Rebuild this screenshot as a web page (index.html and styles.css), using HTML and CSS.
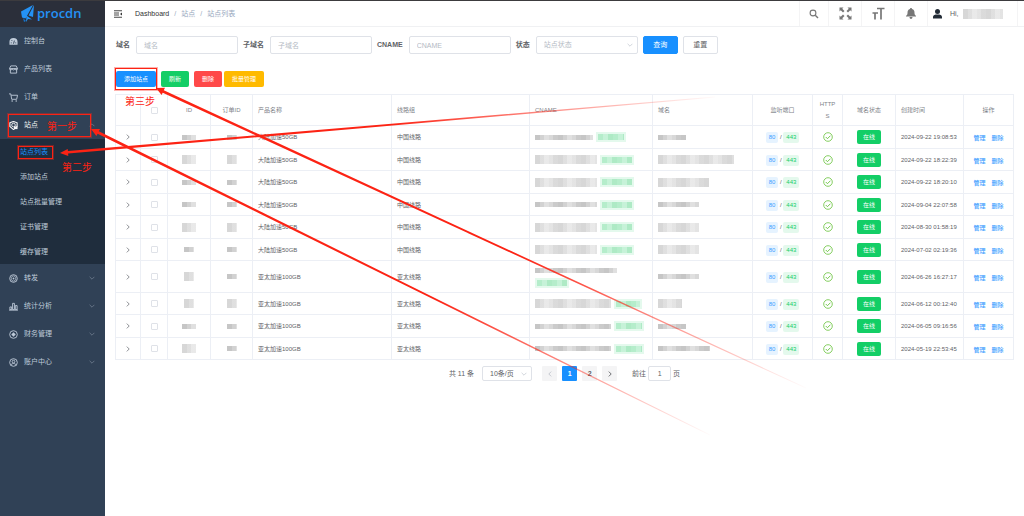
FILE: index.html
```html
<!DOCTYPE html>
<html lang="zh-CN">
<head>
<meta charset="utf-8">
<title>站点列表</title>
<link rel="stylesheet" href="styles.css">
</head>
<body>
<svg class="defs" width="0" height="0" aria-hidden="true">
  <symbol id="down" viewBox="0 0 10 10"><path d="M1 3l4 4 4-4" fill="none" stroke="currentColor"/></symbol>
  <symbol id="right" viewBox="0 0 10 10"><path d="M3 1l4 4-4 4" fill="none" stroke="currentColor" stroke-width="1.5"/></symbol>
  <symbol id="left" viewBox="0 0 10 10"><path d="M7 1L3 5l4 4" fill="none" stroke="currentColor" stroke-width="1.5"/></symbol>
  <symbol id="ok" viewBox="0 0 20 20"><circle cx="10" cy="10" r="8.6" fill="none" stroke="currentColor" stroke-width="1.6"/><path d="M5.5 10l3.4 3.4 6-6" fill="none" stroke="currentColor" stroke-width="1.8"/></symbol>
</svg>
<div class="app">
  <aside class="sidebar">
    <a class="logo" href="#">
      <svg width="16" height="18" viewBox="0 0 16 18"><path d="M14 0L13 12 8.500 10.500zM13 0L1 6.500l1 6 3.500 1zM6.500 10.500L6 17l2-3 4 .500z" fill="#2492f5"/><path d="M3 13l1 4 2-1z" fill="#1670c4"/></svg>
      <span>procdn</span>
    </a>
    <nav class="menu">
      <a class="item" href="#"><svg class="ico" viewBox="0 0 20 20"><path d="M1 17V11a9 9 0 0 1 18 0v6z" fill="currentColor"/><path d="M10 15l2-7M4 13h2M6 7l1 2M14 13h2" stroke="#304156" stroke-width="2"/></svg>控制台</a>
      <a class="item" href="#"><svg class="ico" viewBox="0 0 20 20"><path d="M4 2h12l3 6H1zM3 9v9h14V9M1 8c0 4 6 4 6 0 0 4 6 4 6 0 0 4 6 4 6 0" fill="none" stroke="currentColor" stroke-width="2"/></svg>产品列表</a>
      <a class="item" href="#"><svg class="ico" viewBox="0 0 20 20"><path d="M0 2h4l2 12h11l2-9H5" fill="none" stroke="currentColor" stroke-width="2"/><circle cx="7" cy="18" r="1.700" fill="currentColor"/><circle cx="16" cy="18" r="1.700" fill="currentColor"/></svg>订单</a>
      <a class="item current" href="#"><svg class="ico" viewBox="0 0 20 20"><path d="M2 4l8-3 8 3v8l-8 7-8-7z" fill="none" stroke="currentColor" stroke-width="2.500"/><circle cx="10" cy="9" r="4" fill="none" stroke="currentColor" stroke-width="2"/><path d="M11 12h8v6h-8z" fill="currentColor"/></svg>站点<svg class="caret up" viewBox="0 0 10 10"><use href="#down"/></svg></a>
      <div class="submenu">
        <a class="active" href="#">站点列表</a>
        <a href="#">添加站点</a>
        <a href="#">站点批量管理</a>
        <a href="#">证书管理</a>
        <a href="#">缓存管理</a>
      </div>
      <a class="item" href="#"><svg class="ico" viewBox="0 0 20 20"><circle cx="10" cy="10" r="8.500" fill="none" stroke="currentColor" stroke-width="2"/><path d="M10 4l5 3v6l-5 3-5-3V7z" fill="none" stroke="currentColor" stroke-width="1.500"/><circle cx="10" cy="10" r="2" fill="currentColor"/></svg>转发<svg class="caret" viewBox="0 0 10 10"><use href="#down"/></svg></a>
      <a class="item" href="#"><svg class="ico" viewBox="0 0 20 20"><path d="M2 11h4v6H2zM8 3h4v14H8zM14 8h4v9h-4zM0 18h20" fill="none" stroke="currentColor" stroke-width="2"/></svg>统计分析<svg class="caret" viewBox="0 0 10 10"><use href="#down"/></svg></a>
      <a class="item" href="#"><svg class="ico" viewBox="0 0 20 20"><circle cx="10" cy="10" r="8.500" fill="none" stroke="currentColor" stroke-width="2"/><path d="M10 5l5 5-5 5-5-5z" fill="currentColor"/></svg>财务管理<svg class="caret" viewBox="0 0 10 10"><use href="#down"/></svg></a>
      <a class="item" href="#"><svg class="ico" viewBox="0 0 20 20"><circle cx="10" cy="10" r="8.500" fill="none" stroke="currentColor" stroke-width="2"/><circle cx="10" cy="8" r="3" fill="none" stroke="currentColor" stroke-width="2"/><path d="M4 16c2-5 10-5 12 0" fill="none" stroke="currentColor" stroke-width="2"/></svg>账户中心<svg class="caret" viewBox="0 0 10 10"><use href="#down"/></svg></a>
    </nav>
  </aside>
  <div class="page">
    <header class="topbar">
      <button class="fold" aria-label="折叠菜单"><svg width="8" height="8" viewBox="0 0 16 16"><path d="M0 1.500h16M0 6h10M0 10h10M0 14.500h16" stroke="#333" stroke-width="1.800"/><path d="M16 5v6l-4-3z" fill="#333"/></svg></button>
      <nav class="crumbs"><a href="#">Dashboard</a><i>/</i><span>站点</span><i>/</i><span>站点列表</span></nav>
      <div class="tools">
        <button class="tool t-s" aria-label="搜索"><svg width="10" height="10" viewBox="0 0 20 20"><circle cx="8" cy="8" r="5.800" fill="none" stroke="#777" stroke-width="2.200"/><path d="M12.500 12.500L18 18" stroke="#777" stroke-width="2.800"/></svg></button>
        <button class="tool" aria-label="全屏"><svg width="13" height="13" viewBox="0 0 26 26"><path d="M1 1h8L6.500 3.500 11 8 8 11 3.500 6.500 1 9zM25 1v8l-2.500-2.500L18 11l-3-3 4.500-4.500L17 1zM1 25v-8l2.500 2.500L8 15l3 3-4.500 4.500L9 25zM25 25h-8l2.500-2.500L15 18l3-3 4.500 4.500L25 17z" fill="#777"/></svg></button>
        <button class="tool" aria-label="字号"><svg width="13" height="13" viewBox="0 0 26 26"><path d="M10 3h15M18 3v22M1 12h11M6 12v13" stroke="#777" stroke-width="3.400" fill="none"/></svg></button>
        <button class="tool" aria-label="通知"><svg width="10" height="11" viewBox="0 0 20 22"><path d="M10 0c1.500 0 2 1 2 2 4 1 5 4 5 8 0 3 1 4 3 6v1H0v-1c2-2 3-3 3-6 0-4 1-7 5-8 0-1 .500-2 2-2zM7 18h6c0 5-6 5-6 0z" fill="#777"/></svg></button>
        <div class="user"><svg width="9" height="10" viewBox="0 0 18 20"><circle cx="9" cy="5" r="5" fill="#222b36"/><path d="M0 19v-3c0-4 4-5 9-5s9 1 9 5v3z" fill="#222b36"/></svg><span>Hi,</span><b class="mask name"></b></div>
      </div>
    </header>
    <main class="content">
      <form class="filters">
        <label for="f1">域名</label><input id="f1" type="text" placeholder="域名">
        <label for="f2">子域名</label><input id="f2" type="text" placeholder="子域名">
        <label for="f3">CNAME</label><input id="f3" type="text" placeholder="CNAME">
        <label for="f4">状态</label><span class="pick state"><select id="f4"><option>站点状态</option></select><svg viewBox="0 0 10 10"><use href="#down"/></svg></span>
        <button type="button" class="primary">查询</button>
        <button type="button">重置</button>
      </form>
      <div class="actions">
        <button class="blue">添加站点</button>
        <button class="green">刷新</button>
        <button class="red">删除</button>
        <button class="amber">批量管理</button>
      </div>
      <table class="sites">
        <colgroup><col class="c-exp"><col class="c-chk"><col class="c-id"><col class="c-order"><col class="c-prod"><col class="c-line"><col class="c-cname"><col><col class="c-port"><col class="c-tls"><col class="c-state"><col class="c-time"><col class="c-op"></colgroup>
        <thead><tr><th></th><th class="mid"><input type="checkbox" aria-label="全选"></th><th class="mid">ID</th><th class="mid">订单ID</th><th>产品名称</th><th>线路组</th><th>CNAME</th><th>域名</th><th class="mid">监听端口</th><th class="mid tls">HTTPS</th><th class="mid">域名状态</th><th>创建时间</th><th class="mid">操作</th></tr></thead>
        <tbody>
          <tr><td class="mid"><svg class="exp" viewBox="0 0 10 10"><use href="#right"/></svg></td><td class="mid"><input type="checkbox" aria-label="选择"></td><td class="mid"><b class="mask id"></b></td><td class="mid"><b class="mask order"></b></td><td>大陆加速50GB</td><td>中国线路</td><td><b class="mask" style="width:58px"></b><b class="mask tag" style="width:30px"></b></td><td><b class="mask" style="width:28px"></b></td><td class="mid"><span class="p80">80</span> / <span class="p443">443</span></td><td class="mid"><svg class="ok" viewBox="0 0 20 20"><use href="#ok"/></svg></td><td class="mid"><span class="online">在线</span></td><td>2024-09-22 19:08:53</td><td class="mid op"><a href="#">管理</a><a href="#">删除</a></td></tr>
          <tr><td class="mid"><svg class="exp" viewBox="0 0 10 10"><use href="#right"/></svg></td><td class="mid"><input type="checkbox" aria-label="选择"></td><td class="mid"><b class="mask id tall"></b></td><td class="mid"><b class="mask order tall"></b></td><td>大陆加速50GB</td><td>中国线路</td><td><b class="mask tall" style="width:62px"></b><b class="mask tag" style="width:34px"></b></td><td><b class="mask tall" style="width:76px"></b></td><td class="mid"><span class="p80">80</span> / <span class="p443">443</span></td><td class="mid"><svg class="ok" viewBox="0 0 20 20"><use href="#ok"/></svg></td><td class="mid"><span class="online">在线</span></td><td>2024-09-22 18:22:39</td><td class="mid op"><a href="#">管理</a><a href="#">删除</a></td></tr>
          <tr><td class="mid"><svg class="exp" viewBox="0 0 10 10"><use href="#right"/></svg></td><td class="mid"><input type="checkbox" aria-label="选择"></td><td class="mid"><b class="mask id"></b></td><td class="mid"><b class="mask order"></b></td><td>大陆加速50GB</td><td>中国线路</td><td><b class="mask tall" style="width:62px"></b><b class="mask tag" style="width:34px"></b></td><td><b class="mask tall" style="width:51px"></b></td><td class="mid"><span class="p80">80</span> / <span class="p443">443</span></td><td class="mid"><svg class="ok" viewBox="0 0 20 20"><use href="#ok"/></svg></td><td class="mid"><span class="online">在线</span></td><td>2024-09-22 18:20:10</td><td class="mid op"><a href="#">管理</a><a href="#">删除</a></td></tr>
          <tr><td class="mid"><svg class="exp" viewBox="0 0 10 10"><use href="#right"/></svg></td><td class="mid"><input type="checkbox" aria-label="选择"></td><td class="mid"><b class="mask id"></b></td><td class="mid"><b class="mask order"></b></td><td>大陆加速50GB</td><td>中国线路</td><td><b class="mask" style="width:62px"></b><b class="mask tag" style="width:34px"></b></td><td><b class="mask" style="width:41px"></b></td><td class="mid"><span class="p80">80</span> / <span class="p443">443</span></td><td class="mid"><svg class="ok" viewBox="0 0 20 20"><use href="#ok"/></svg></td><td class="mid"><span class="online">在线</span></td><td>2024-09-04 22:07:58</td><td class="mid op"><a href="#">管理</a><a href="#">删除</a></td></tr>
          <tr><td class="mid"><svg class="exp" viewBox="0 0 10 10"><use href="#right"/></svg></td><td class="mid"><input type="checkbox" aria-label="选择"></td><td class="mid"><b class="mask id tall"></b></td><td class="mid"><b class="mask order tall"></b></td><td>大陆加速50GB</td><td>中国线路</td><td><b class="mask tall" style="width:62px"></b><b class="mask tag" style="width:34px"></b></td><td><b class="mask tall" style="width:41px"></b></td><td class="mid"><span class="p80">80</span> / <span class="p443">443</span></td><td class="mid"><svg class="ok" viewBox="0 0 20 20"><use href="#ok"/></svg></td><td class="mid"><span class="online">在线</span></td><td>2024-08-30 01:58:19</td><td class="mid op"><a href="#">管理</a><a href="#">删除</a></td></tr>
          <tr><td class="mid"><svg class="exp" viewBox="0 0 10 10"><use href="#right"/></svg></td><td class="mid"><input type="checkbox" aria-label="选择"></td><td class="mid"><b class="mask id short"></b></td><td class="mid"><b class="mask order"></b></td><td>大陆加速50GB</td><td>中国线路</td><td><b class="mask tall" style="width:62px"></b><b class="mask tag" style="width:34px"></b></td><td><b class="mask tall" style="width:41px"></b></td><td class="mid"><span class="p80">80</span> / <span class="p443">443</span></td><td class="mid"><svg class="ok" viewBox="0 0 20 20"><use href="#ok"/></svg></td><td class="mid"><span class="online">在线</span></td><td>2024-07-02 02:19:36</td><td class="mid op"><a href="#">管理</a><a href="#">删除</a></td></tr>
          <tr class="double"><td class="mid"><svg class="exp" viewBox="0 0 10 10"><use href="#right"/></svg></td><td class="mid"><input type="checkbox" aria-label="选择"></td><td class="mid"><b class="mask id short tall"></b></td><td class="mid"><b class="mask order"></b></td><td>亚太加速100GB</td><td>亚太线路</td><td><b class="mask" style="width:82px"></b><br><b class="mask tag first" style="width:34px"></b></td><td><b class="mask" style="width:41px"></b></td><td class="mid"><span class="p80">80</span> / <span class="p443">443</span></td><td class="mid"><svg class="ok" viewBox="0 0 20 20"><use href="#ok"/></svg></td><td class="mid"><span class="online">在线</span></td><td>2024-06-26 16:27:17</td><td class="mid op"><a href="#">管理</a><a href="#">删除</a></td></tr>
          <tr><td class="mid"><svg class="exp" viewBox="0 0 10 10"><use href="#right"/></svg></td><td class="mid"><input type="checkbox" aria-label="选择"></td><td class="mid"><b class="mask id short tall"></b></td><td class="mid"><b class="mask order tall"></b></td><td>亚太加速100GB</td><td>亚太线路</td><td><b class="mask tall" style="width:76px"></b><b class="mask tag" style="width:28px"></b></td><td><b class="mask tall" style="width:24px"></b></td><td class="mid"><span class="p80">80</span> / <span class="p443">443</span></td><td class="mid"><svg class="ok" viewBox="0 0 20 20"><use href="#ok"/></svg></td><td class="mid"><span class="online">在线</span></td><td>2024-06-12 00:12:40</td><td class="mid op"><a href="#">管理</a><a href="#">删除</a></td></tr>
          <tr><td class="mid"><svg class="exp" viewBox="0 0 10 10"><use href="#right"/></svg></td><td class="mid"><input type="checkbox" aria-label="选择"></td><td class="mid"><b class="mask id"></b></td><td class="mid"><b class="mask order"></b></td><td>亚太加速100GB</td><td>亚太线路</td><td><b class="mask" style="width:76px"></b><b class="mask tag" style="width:30px"></b></td><td><b class="mask" style="width:28px"></b></td><td class="mid"><span class="p80">80</span> / <span class="p443">443</span></td><td class="mid"><svg class="ok" viewBox="0 0 20 20"><use href="#ok"/></svg></td><td class="mid"><span class="online">在线</span></td><td>2024-06-05 09:16:56</td><td class="mid op"><a href="#">管理</a><a href="#">删除</a></td></tr>
          <tr><td class="mid"><svg class="exp" viewBox="0 0 10 10"><use href="#right"/></svg></td><td class="mid"><input type="checkbox" aria-label="选择"></td><td class="mid"><b class="mask id tall"></b></td><td class="mid"><b class="mask order"></b></td><td>亚太加速100GB</td><td>亚太线路</td><td><b class="mask" style="width:76px"></b><b class="mask tag" style="width:30px"></b></td><td><b class="mask" style="width:52px"></b></td><td class="mid"><span class="p80">80</span> / <span class="p443">443</span></td><td class="mid"><svg class="ok" viewBox="0 0 20 20"><use href="#ok"/></svg></td><td class="mid"><span class="online">在线</span></td><td>2024-05-19 22:53:45</td><td class="mid op"><a href="#">管理</a><a href="#">删除</a></td></tr>
        </tbody>
      </table>
      <div class="pager">
        <span class="total">共 11 条</span>
        <span class="pick size"><select aria-label="每页条数"><option>10条/页</option></select><svg viewBox="0 0 10 10"><use href="#down"/></svg></span>
        <div class="pages">
          <button aria-label="上一页" disabled><svg viewBox="0 0 10 10"><use href="#left"/></svg></button>
          <button class="on">1</button>
          <button>2</button>
          <button aria-label="下一页"><svg viewBox="0 0 10 10"><use href="#right"/></svg></button>
        </div>
        <label class="jump">前往<input type="text" value="1">页</label>
      </div>
    </main>
  </div>
</div>
<div class="notes">
  <svg class="arrows" width="1024" height="516" viewBox="0 0 1024 516">
    <defs>
      <linearGradient id="ga" gradientUnits="userSpaceOnUse" x1="156" y1="88" x2="810" y2="390"><stop offset=".55" stop-color="#fc2314"/><stop offset="1" stop-color="#fc2314" stop-opacity="0"/></linearGradient>
      <linearGradient id="gb" gradientUnits="userSpaceOnUse" x1="91" y1="129" x2="714" y2="437"><stop offset=".55" stop-color="#fc2314"/><stop offset="1" stop-color="#fc2314" stop-opacity="0"/></linearGradient>
      <linearGradient id="gc" gradientUnits="userSpaceOnUse" x1="60" y1="153" x2="720" y2="97"><stop offset=".5" stop-color="#fc2314"/><stop offset="1" stop-color="#fc2314" stop-opacity="0"/></linearGradient>
    </defs>
    <path d="M156 88L165 87.800 163.800 90.200 806 387.500 806 388.500 162.700 92.700 161.600 95z" fill="url(#ga)"/>
    <path d="M91 129L100 128.900 98.800 131.200 710 434.500 710 435.500 97.600 133.800 96.400 136.100z" fill="url(#gb)"/>
    <path d="M60 153L67.700 149 67.900 151.100 715 96.500 715 97.500 68.100 153.600 68.300 156z" fill="url(#gc)"/>
  </svg>
  <div class="frame frame-menu"></div>
  <div class="frame frame-list"></div>
  <div class="frame frame-add"></div>
  <span class="step step-1">第一步</span>
  <span class="step step-2">第二步</span>
  <span class="step step-3">第三步</span>
</div>
</body>
</html>
```
FILE: styles.css
```css
* { box-sizing: border-box; }
body {
  margin: 0;
  background: #fff;
  color: #606266;
  font: 6px/12px "Liberation Sans", "Noto Sans CJK SC", sans-serif;
}
a { color: inherit; text-decoration: none; }
button, input, select { font: inherit; color: inherit; margin: 0; }
button { border: 0; padding: 0; background: none; }
svg { display: block; }
.defs { position: absolute; }
.app { display: flex; min-height: 100vh; border-top: 1px solid #3c3b3e; }

.sidebar { flex: none; width: 105px; background: #304156; color: #bfcbd9; font-size: 7px; }
.logo {
  display: flex; align-items: center; gap: 1px; height: 26px; padding-left: 20px;
  background: #2b2f3a; color: #2492f5; font: 600 13px/22px "Open Sans", "Noto Sans", sans-serif;
}
.logo span { padding-bottom: 2px; }
.item { display: flex; align-items: center; height: 28px; padding: 0 10px 0 9px; }
.ico { width: 9px; height: 9px; margin-right: 6px; }
.current { color: #f4f4f5; }
.caret { width: 6px; height: 6px; margin-left: auto; color: #8794a5; }
.caret.up { transform: rotate(180deg); }
.submenu { background: #1f2d3d; }
.submenu a { display: flex; align-items: center; height: 25px; padding-left: 20px; }
.submenu .active { color: #1890ff; }

.page { flex: 1; min-width: 0; }
.topbar {
  display: flex; align-items: stretch; height: 26px; padding-right: 6px;
  border-bottom: 1px solid #f0f1f3; font-size: 7px;
}
.fold { width: 25px; display: grid; place-items: center; }
.crumbs { display: flex; align-items: center; padding-left: 5px; color: #97a8be; }
.crumbs a { color: #303133; }
.crumbs i { margin: 0 5px; font-style: normal; }
.tools { display: flex; margin-left: auto; }
.tool { display: grid; place-items: center; width: 33px; border-left: 1px solid #f4f4f5; }
.t-s { width: 29px; }
.user { display: flex; align-items: center; width: 91px; padding-left: 5px; border: solid #f4f4f5; border-width: 0 1px; }
.user span { width: 13px; margin-left: 8px; }

.content { padding: 9px 10px; }
.filters { display: flex; align-items: center; flex-wrap: wrap; padding-left: 1px; font-size: 7px; }
.filters label { margin-right: 6px; font-weight: bold; }
.filters input, .pick select { border: 1px solid #dfe2e8; border-radius: 2px; background: #fff; outline: 0; }
.filters input { width: 102px; height: 18px; padding: 0 7px; margin-right: 5px; }
.filters input::placeholder { color: #b4bac4; }
.pick { display: flex; align-items: center; }
.pick select { width: 100%; height: 100%; appearance: none; padding: 0 7px; }
.pick svg { width: 6px; height: 6px; margin-left: -11px; margin-right: 5px; color: #b4bac4; pointer-events: none; }
.state { width: 102px; height: 18px; margin-right: 5px; color: #b4bac4; }
.filters button { width: 35px; height: 18px; margin-right: 5px; border: 1px solid #dfe2e8; border-radius: 2px; }
.filters .primary { background: #1890ff; border-color: #1890ff; color: #fff; }

.actions { display: flex; gap: 5px; padding: 17px 0 7px 1px; color: #fff; }
.actions button { height: 16px; padding: 0 8px; border-radius: 2px; }
.blue { background: #1890ff; }
.green { background: #13ce66; }
.red { background: #ff4949; }
.actions .amber { margin-left: -3px; background: #ffba00; }

.sites { width: 100%; table-layout: fixed; border-collapse: collapse; }
.sites th, .sites td { padding: 0 5px; border: 1px solid #eceff5; text-align: left; }
.sites th { height: 31px; color: #808389; font-weight: normal; }
.sites td { height: 22px; }
.sites tr:nth-child(odd) td { height: 23px; }
.sites tr.double:nth-child(odd) td { height: 32px; }
.sites .mid { text-align: center; }
.sites .tls { padding: 0 6px; word-break: break-all; }
.c-exp { width: 25px; } .c-chk { width: 27px; } .c-id { width: 43px; } .c-order { width: 42px; }
.c-prod { width: 139px; } .c-line { width: 138px; } .c-cname { width: 123px; } .c-port { width: 60px; }
.c-tls { width: 30px; } .c-state { width: 53px; } .c-time { width: 68px; } .c-op { width: 50px; }
.sites input { display: block; appearance: none; width: 7px; height: 7px; margin: 0 auto; border: 1px solid #dfe2e8; border-radius: 1px; background: #fff; }
.exp { width: 6px; height: 6px; margin: 0 auto; color: #808389; }
.ok { width: 10px; height: 10px; margin: 0 auto; color: #67c23a; }
.p80, .p443 { display: inline-block; padding: 0 3px; border-radius: 2px; line-height: 11px; }
.p80 { background: #e6f3ff; color: #409eff; }
.p443 { background: #e4f9ed; color: #13ce66; }
.online { display: inline-block; padding: 0 6px; border-radius: 2px; background: #13ce66; color: #fff; line-height: 14px; }
.sites .op { padding-top: 2px; }
.op a { color: #409eff; font-weight: 500; margin: 0 3px; }

.mask {
  display: inline-block; height: 5px; vertical-align: middle;
  background: repeating-linear-gradient(90deg, #c6c6c6 0 5px, #d2d2d2 5px 9px, #e0e0e0 9px 14px, #d8d8d8 14px 18px, #cbcbcb 18px 23px);
}
.mask.tall { height: 9px; opacity: .7; }
.mask.id { width: 14px; }
.mask.short { width: 10px; }
.mask.order { width: 10px; }
.mask.tag { height: 10px; margin-left: 3px; border: 2px solid #e4f9ed; background: repeating-linear-gradient(90deg, #b5edcb 0 5px, #c6f2d8 5px 10px, #aeeac5 10px 15px); }
.mask.first { margin-left: 0; }
.mask.name { width: 40px; height: 10px; opacity: .7; }

.pager { display: flex; justify-content: center; align-items: center; padding-top: 6px; font-size: 7px; }
.size { width: 50px; height: 15px; margin: 0 10px 0 8px; }
.pages { display: flex; gap: 5px; }
.pages button { display: grid; place-items: center; width: 15px; height: 15px; border-radius: 1px; background: #f4f4f5; font-weight: bold; }
.pages .on { background: #1890ff; color: #fff; }
.pages button svg { width: 6px; height: 6px; }
.pages button:disabled { color: #c0c4cc; }
.jump { display: flex; align-items: center; gap: 2px; margin-left: 15px; }
.jump input { width: 23px; height: 15px; padding: 0; border: 1px solid #dfe2e8; border-radius: 2px; text-align: center; }

/* walkthrough marks drawn over the interface */
.notes { position: absolute; top: 0; left: 0; color: #fc2314; pointer-events: none; }
.frame { position: absolute; border: 1px solid #fc2314; outline: 1px solid rgba(252, 35, 20, .35); }
.frame-menu { left: 8px; top: 114px; width: 83px; height: 23px; }
.frame-list { left: 18px; top: 146px; width: 35px; height: 13px; }
.frame-add { left: 115px; top: 68px; width: 42px; height: 22px; }
.step { position: absolute; font-size: 10px; line-height: 14px; white-space: nowrap; }
.step-1 { left: 47px; top: 120px; }
.step-2 { left: 62px; top: 161px; }
.step-3 { left: 125px; top: 95px; }
```
